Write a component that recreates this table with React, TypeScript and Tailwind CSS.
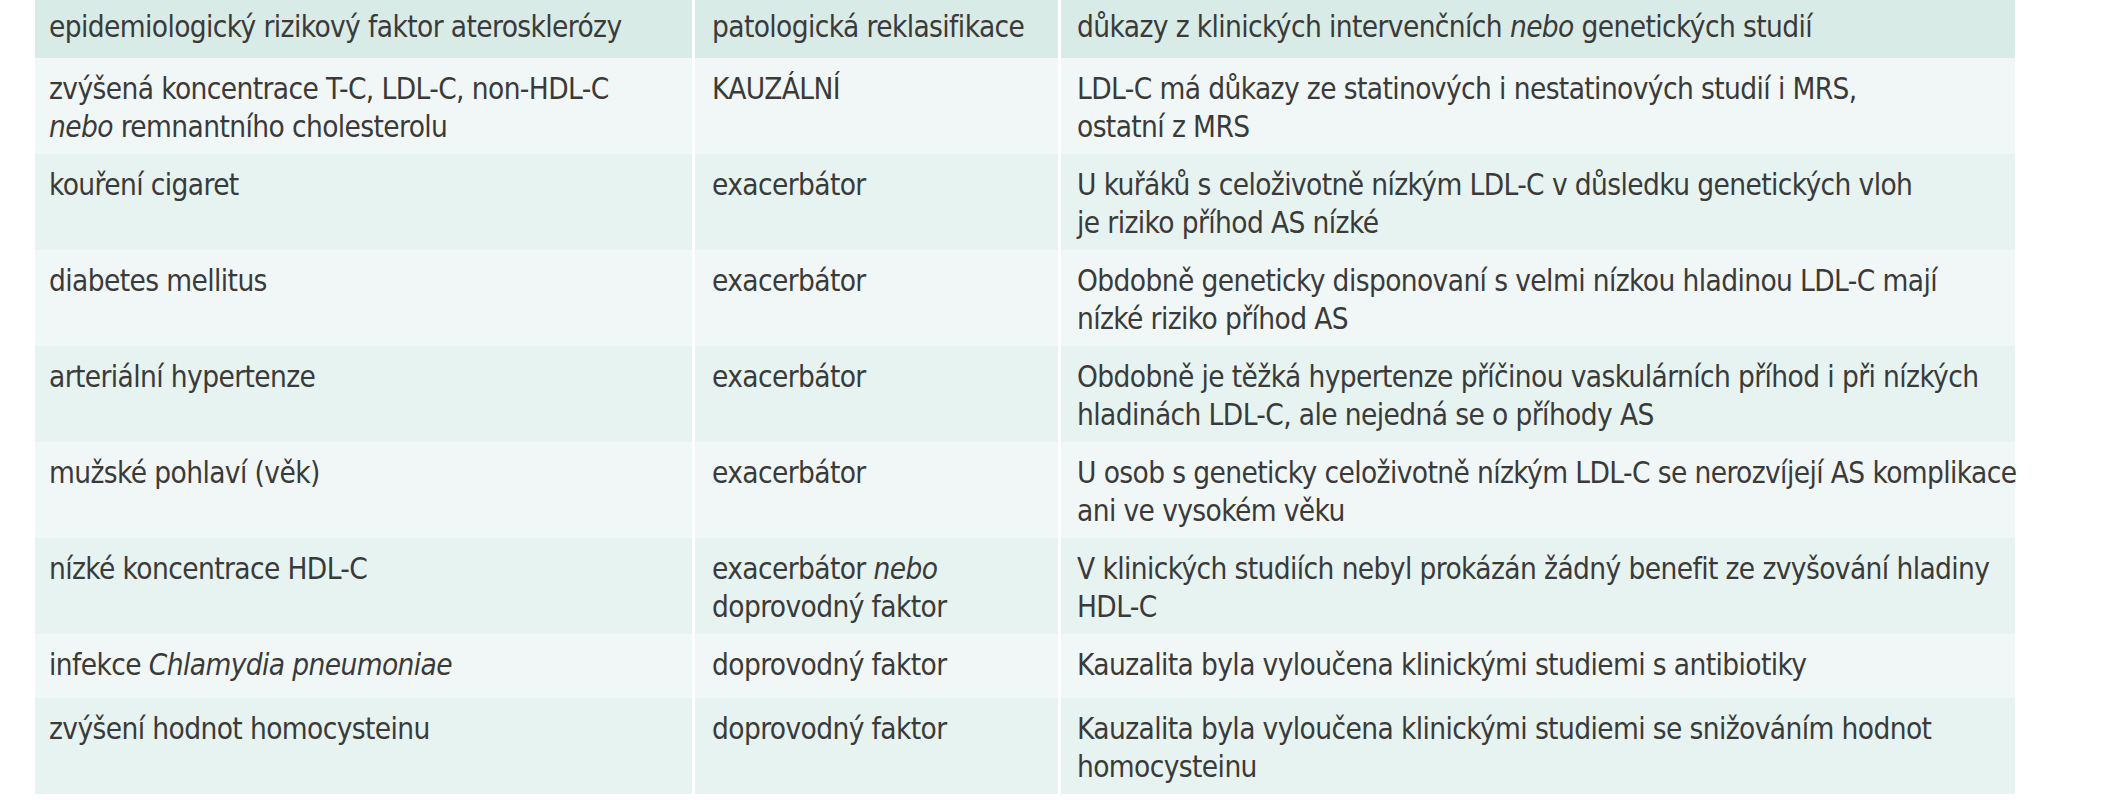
import type { ReactNode } from "react";

type Row = [ReactNode, ReactNode, ReactNode];

const header: Row = [
	"epidemiologický rizikový faktor aterosklerózy",
	"patologická reklasifikace",
	<>důkazy z klinických intervenčních <i>nebo</i> genetických studií</>,
];

const rows: Row[] = [
	[
		<>zvýšená koncentrace T-C, LDL-C, non-HDL-C<br /><i>nebo</i> remnantního cholesterolu</>,
		"KAUZÁLNÍ",
		<>LDL-C má důkazy ze statinových i nestatinových studií i MRS,<br />ostatní z MRS</>,
	],
	[
		"kouření cigaret",
		"exacerbátor",
		<>U kuřáků s celoživotně nízkým LDL-C v důsledku genetických vloh<br />je riziko příhod AS nízké</>,
	],
	[
		"diabetes mellitus",
		"exacerbátor",
		<>Obdobně geneticky disponovaní s velmi nízkou hladinou LDL-C mají<br />nízké riziko příhod AS</>,
	],
	[
		"arteriální hypertenze",
		"exacerbátor",
		<>Obdobně je těžká hypertenze příčinou vaskulárních příhod i při nízkých<br />hladinách LDL-C, ale nejedná se o příhody AS</>,
	],
	[
		"mužské pohlaví (věk)",
		"exacerbátor",
		<>U osob s geneticky celoživotně nízkým LDL-C se nerozvíjejí AS komplikace<br />ani ve vysokém věku</>,
	],
	[
		"nízké koncentrace HDL-C",
		<>exacerbátor <i>nebo</i><br />doprovodný faktor</>,
		<>V klinických studiích nebyl prokázán žádný benefit ze zvyšování hladiny<br />HDL-C</>,
	],
	[
		<>infekce <i>Chlamydia pneumoniae</i></>,
		"doprovodný faktor",
		"Kauzalita byla vyloučena klinickými studiemi s antibiotiky",
	],
	[
		"zvýšení hodnot homocysteinu",
		"doprovodný faktor",
		<>Kauzalita byla vyloučena klinickými studiemi se snižováním hodnot<br />homocysteinu</>,
	],
];

const cellPad = ["pl-[14px]", "pl-[17px]", "pl-[16px]"];

function TableRow({ cells, bg, head }: { cells: Row; bg: string; head?: boolean }) {
	return (
		<div className="grid grid-cols-[657px_363px_954px] gap-x-[3px]">
			{cells.map((c, i) => (
				<div
					key={i}
					className={`${bg} ${cellPad[i]} whitespace-nowrap ${head ? "pt-[8px] pb-[12px]" : "pt-[12px] pb-[8px] min-h-[64px]"}`}
				>
					{c}
				</div>
			))}
		</div>
	);
}

export default function App() {
	return (
		<div className="w-[2122px] h-[800px] bg-white pl-[35px]">
			<div
				className="w-[1980px] text-[29.5px] leading-[38px] tracking-[-0.6px] text-[#3a3a3a]"
				style={{ fontFamily: '"Liberation Sans Narrow", "DejaVu Sans Condensed", "Liberation Sans", sans-serif' }}
			>
				<TableRow cells={header} bg="bg-[#d9ebe6]" head />
				{rows.map((r, i) => (
					<TableRow key={i} cells={r} bg={i % 2 === 0 ? "bg-[#f1f7f6]" : "bg-[#e6f3f1]"} />
				))}
			</div>
		</div>
	);
}
